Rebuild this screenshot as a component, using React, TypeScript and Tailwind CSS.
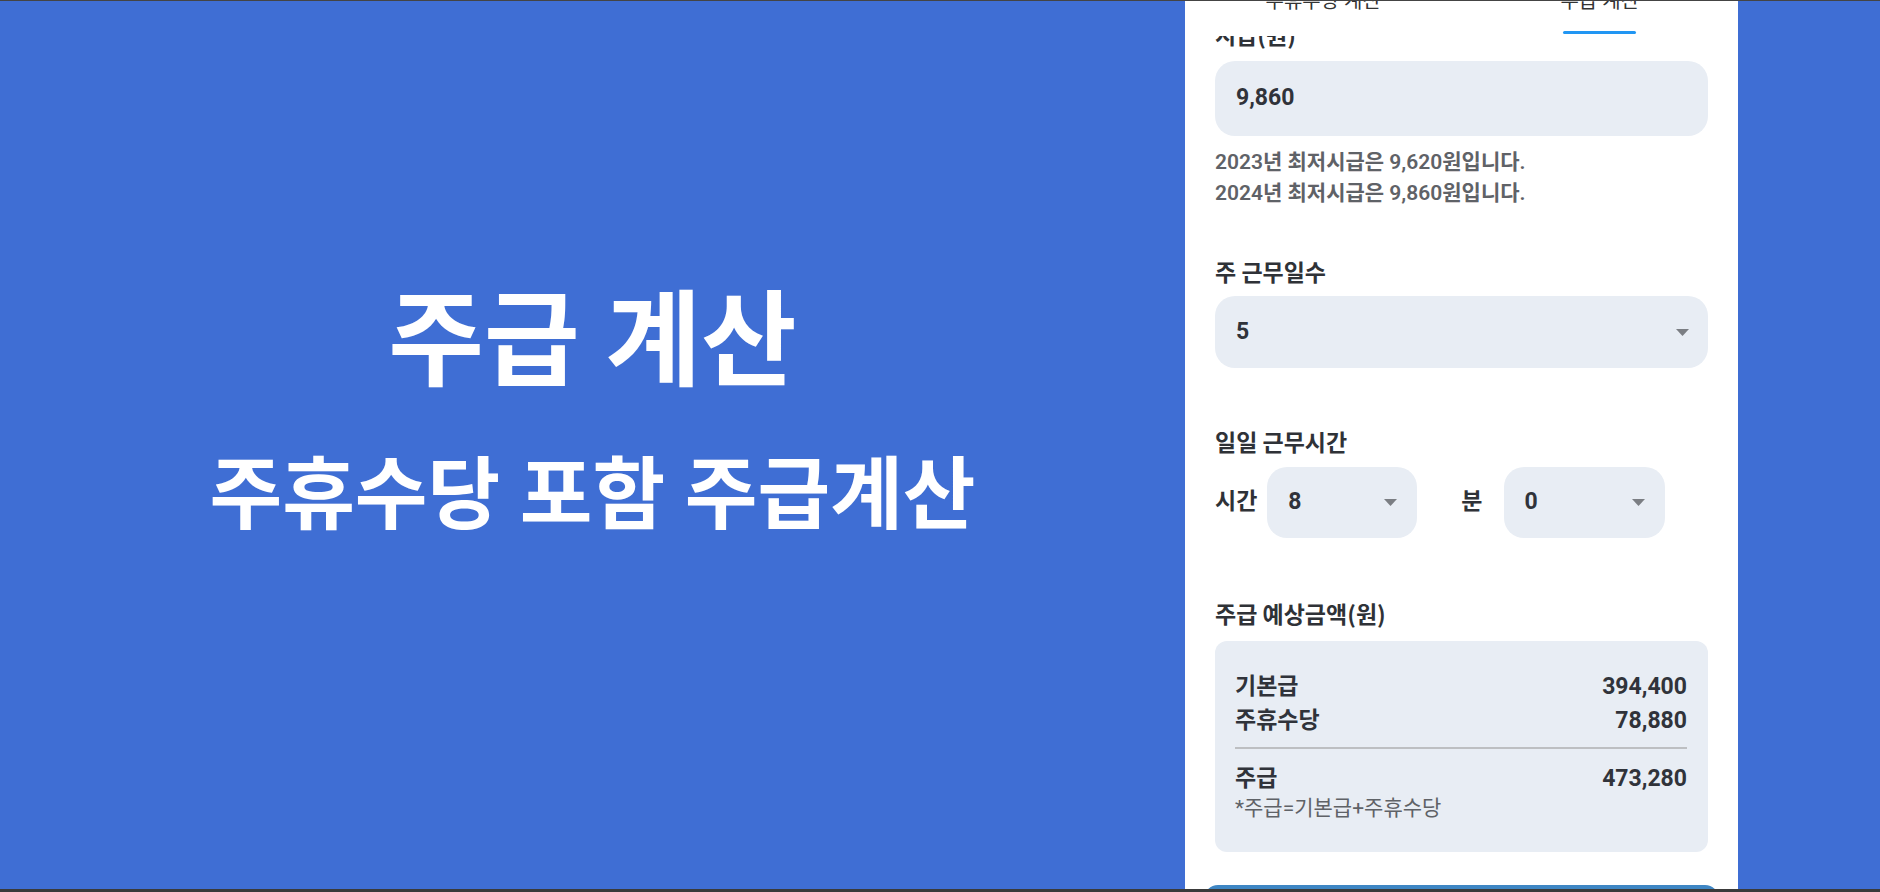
import React from "react";

const font = { fontFamily: 'Roboto, "Noto Sans CJK KR", "Noto Sans", sans-serif' };
const krFont = { fontFamily: '"Noto Sans CJK KR", Roboto, sans-serif' };

function Caret() {
  return (
    <svg width="13" height="7" viewBox="0 0 13 7" className="shrink-0">
      <path d="M0 0 L13 0 L6.5 7 Z" fill="#7b7e83" />
    </svg>
  );
}

function Label({ children, className = "" }: { children: React.ReactNode; className?: string }) {
  return (
    <div className={`text-[23px] leading-[30px] font-semibold text-[#2f3237] ${className}`} style={krFont}>
      {children}
    </div>
  );
}

export default function App() {
  return (
    <div
      className="w-[1880px] h-[892px] bg-[#3f6ed4] flex flex-col overflow-hidden"
      style={font}
    >
      <div className="h-[1px] bg-[#444444] shrink-0" />
      <div className="flex flex-1 min-h-0">
        {/* left */}
        <div className="flex-1 flex flex-col items-center text-white font-bold pt-[279px]">
          <div className="text-[104px] leading-[126px]">주급 계산</div>
          <div className="text-[79px] leading-[100px] mt-[40px]">주휴수당 포함 주급계산</div>
        </div>

        {/* phone panel */}
        <div className="w-[553px] bg-white flex flex-col overflow-hidden shrink-0">
          <div className="relative z-10 h-[35px] bg-white flex shrink-0 overflow-hidden">
            <div className="flex-1 flex flex-col items-center">
              <div className="text-[20px] leading-[22px] -mt-[11px] text-[#333]">주휴수당 계산</div>
            </div>
            <div className="flex-1 flex flex-col items-center">
              <div className="text-[20px] leading-[22px] -mt-[11px] text-[#333]">주급 계산</div>
              <div className="mt-auto mb-[2px] w-[73px] h-[3px] rounded-full bg-[#2196f3]" />
            </div>
          </div>

          <div className="flex flex-col px-[30px] -mt-[17px]">
            <Label>시급(원)</Label>
            <div className="mt-[12px] h-[75px] rounded-[20px] bg-[#e8edf4] flex items-center px-[21px] text-[23px] font-bold text-[#30333a]">
              9,860
            </div>
            <div className="mt-[11px] text-[21px] leading-[31px] font-semibold text-[#5f6267]">
              <div>2023년 최저시급은 9,620원입니다.</div>
              <div>2024년 최저시급은 9,860원입니다.</div>
            </div>

            <Label className="mt-[47px]">주 근무일수</Label>
            <div className="mt-[10px] h-[72px] rounded-[20px] bg-[#e8edf4] flex items-center justify-between pl-[21px] pr-[19px] text-[23px] font-bold text-[#30333a]">
              <span>5</span>
              <Caret />
            </div>

            <Label className="mt-[58px]">일일 근무시간</Label>
            <div className="mt-[11px] flex items-center">
              <span className="text-[23px] font-semibold text-[#2f3237]">시간</span>
              <div className="ml-[10px] w-[150px] h-[71px] rounded-[20px] bg-[#e8edf4] flex items-center justify-between pl-[21px] pr-[20px] text-[23px] font-bold text-[#30333a]">
                <span>8</span>
                <Caret />
              </div>
              <span className="ml-[44px] text-[23px] font-semibold text-[#2f3237]">분</span>
              <div className="ml-[21px] w-[161px] h-[71px] rounded-[20px] bg-[#e8edf4] flex items-center justify-between pl-[21px] pr-[20px] text-[23px] font-bold text-[#30333a]">
                <span>0</span>
                <Caret />
              </div>
            </div>

            <Label className="mt-[60px]">주급 예상금액(원)</Label>
            <div className="mt-[13px] rounded-[12px] bg-[#e8edf4] pl-[20px] pr-[21px] pt-[29px] pb-[32px] text-[#30333a]">
              <div className="flex justify-between text-[23px] leading-[34px] font-bold">
                <span>기본급</span>
                <span>394,400</span>
              </div>
              <div className="flex justify-between text-[23px] leading-[34px] font-bold">
                <span>주휴수당</span>
                <span>78,880</span>
              </div>
              <div className="mt-[9px] h-[2px] bg-[#bdbfc2]" />
              <div className="mt-[13px] flex justify-between text-[23px] leading-[34px] font-bold">
                <span>주급</span>
                <span>473,280</span>
              </div>
              <div className="text-[21px] leading-[24px] text-[#5f6267]">*주급=기본급+주휴수당</div>
            </div>
          </div>
          <div className="mx-[19px] mt-[33px] h-[40px] rounded-t-[14px] bg-[#3e86c4] shrink-0" />
        </div>

        <div className="w-[142px] shrink-0" />
      </div>
      <div className="h-[3px] bg-[#3a3a3a] shrink-0" />
    </div>
  );
}
